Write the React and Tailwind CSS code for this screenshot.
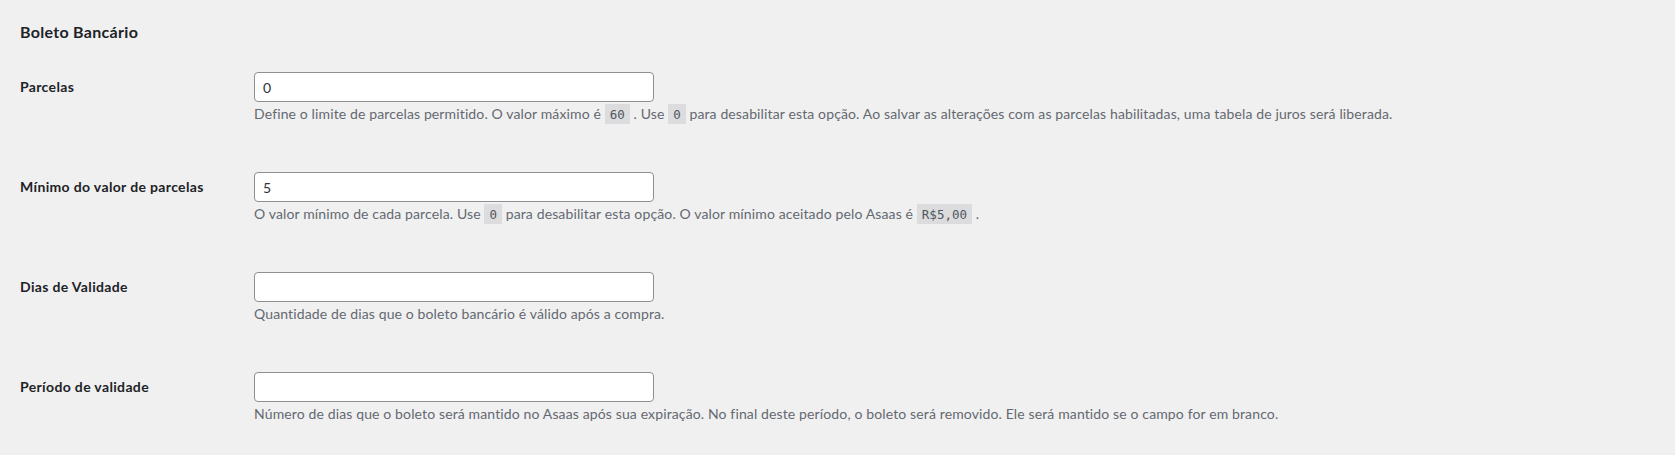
import React from "react";

const Code = ({ children }) => (
  <code className="bg-[#dcdcde] text-[#50575e] px-[5px] pt-[3px] pb-[2px] text-[12.5px] tracking-normal font-['DejaVu_Sans_Mono',monospace]">
    {children}
  </code>
);

const Row = ({ label, value, children }) => (
  <div className="flex items-start h-[100px]">
    <div className="w-[234px] shrink-0 pt-[5px] leading-[20px] text-[14px] font-bold tracking-[0.35px] text-[#1d2327]">
      {label}
    </div>
    <div className="flex flex-col">
      <input
        type="text"
        defaultValue={value}
        className="w-[400px] h-[30px] bg-white border border-[#8c8f94] rounded-[4px] px-[8px] text-[14px] text-[#2c3338] outline-none"
      />
      <p className="mt-[2px] leading-[20px] text-[14px] tracking-[0.13px] text-[#646970] whitespace-nowrap">{children}</p>
    </div>
  </div>
);

export default function App() {
  return (
    <div className="w-full min-h-[455px] bg-[#f0f0f1] px-[20px] font-['Lato','Noto_Sans',sans-serif]">
      <h2 className="pt-[22px] leading-[20px] text-[16px] font-bold tracking-[0.3px] text-[#1d2327]">Boleto Bancário</h2>
      <div className="mt-[30px]">
        <Row label="Parcelas" value="0">
          Define o limite de parcelas permitido. O valor máximo é <Code>60</Code> . Use <Code>0</Code> para desabilitar esta opção. Ao salvar as alterações com as parcelas habilitadas, uma tabela de juros será liberada.
        </Row>
        <Row label="Mínimo do valor de parcelas" value="5">
          O valor mínimo de cada parcela. Use <Code>0</Code> para desabilitar esta opção. O valor mínimo aceitado pelo Asaas é <Code>R$5,00</Code> .
        </Row>
        <Row label="Dias de Validade" value="">
          Quantidade de dias que o boleto bancário é válido após a compra.
        </Row>
        <Row label="Período de validade" value="">
          Número de dias que o boleto será mantido no Asaas após sua expiração. No final deste período, o boleto será removido. Ele será mantido se o campo for em branco.
        </Row>
      </div>
    </div>
  );
}
